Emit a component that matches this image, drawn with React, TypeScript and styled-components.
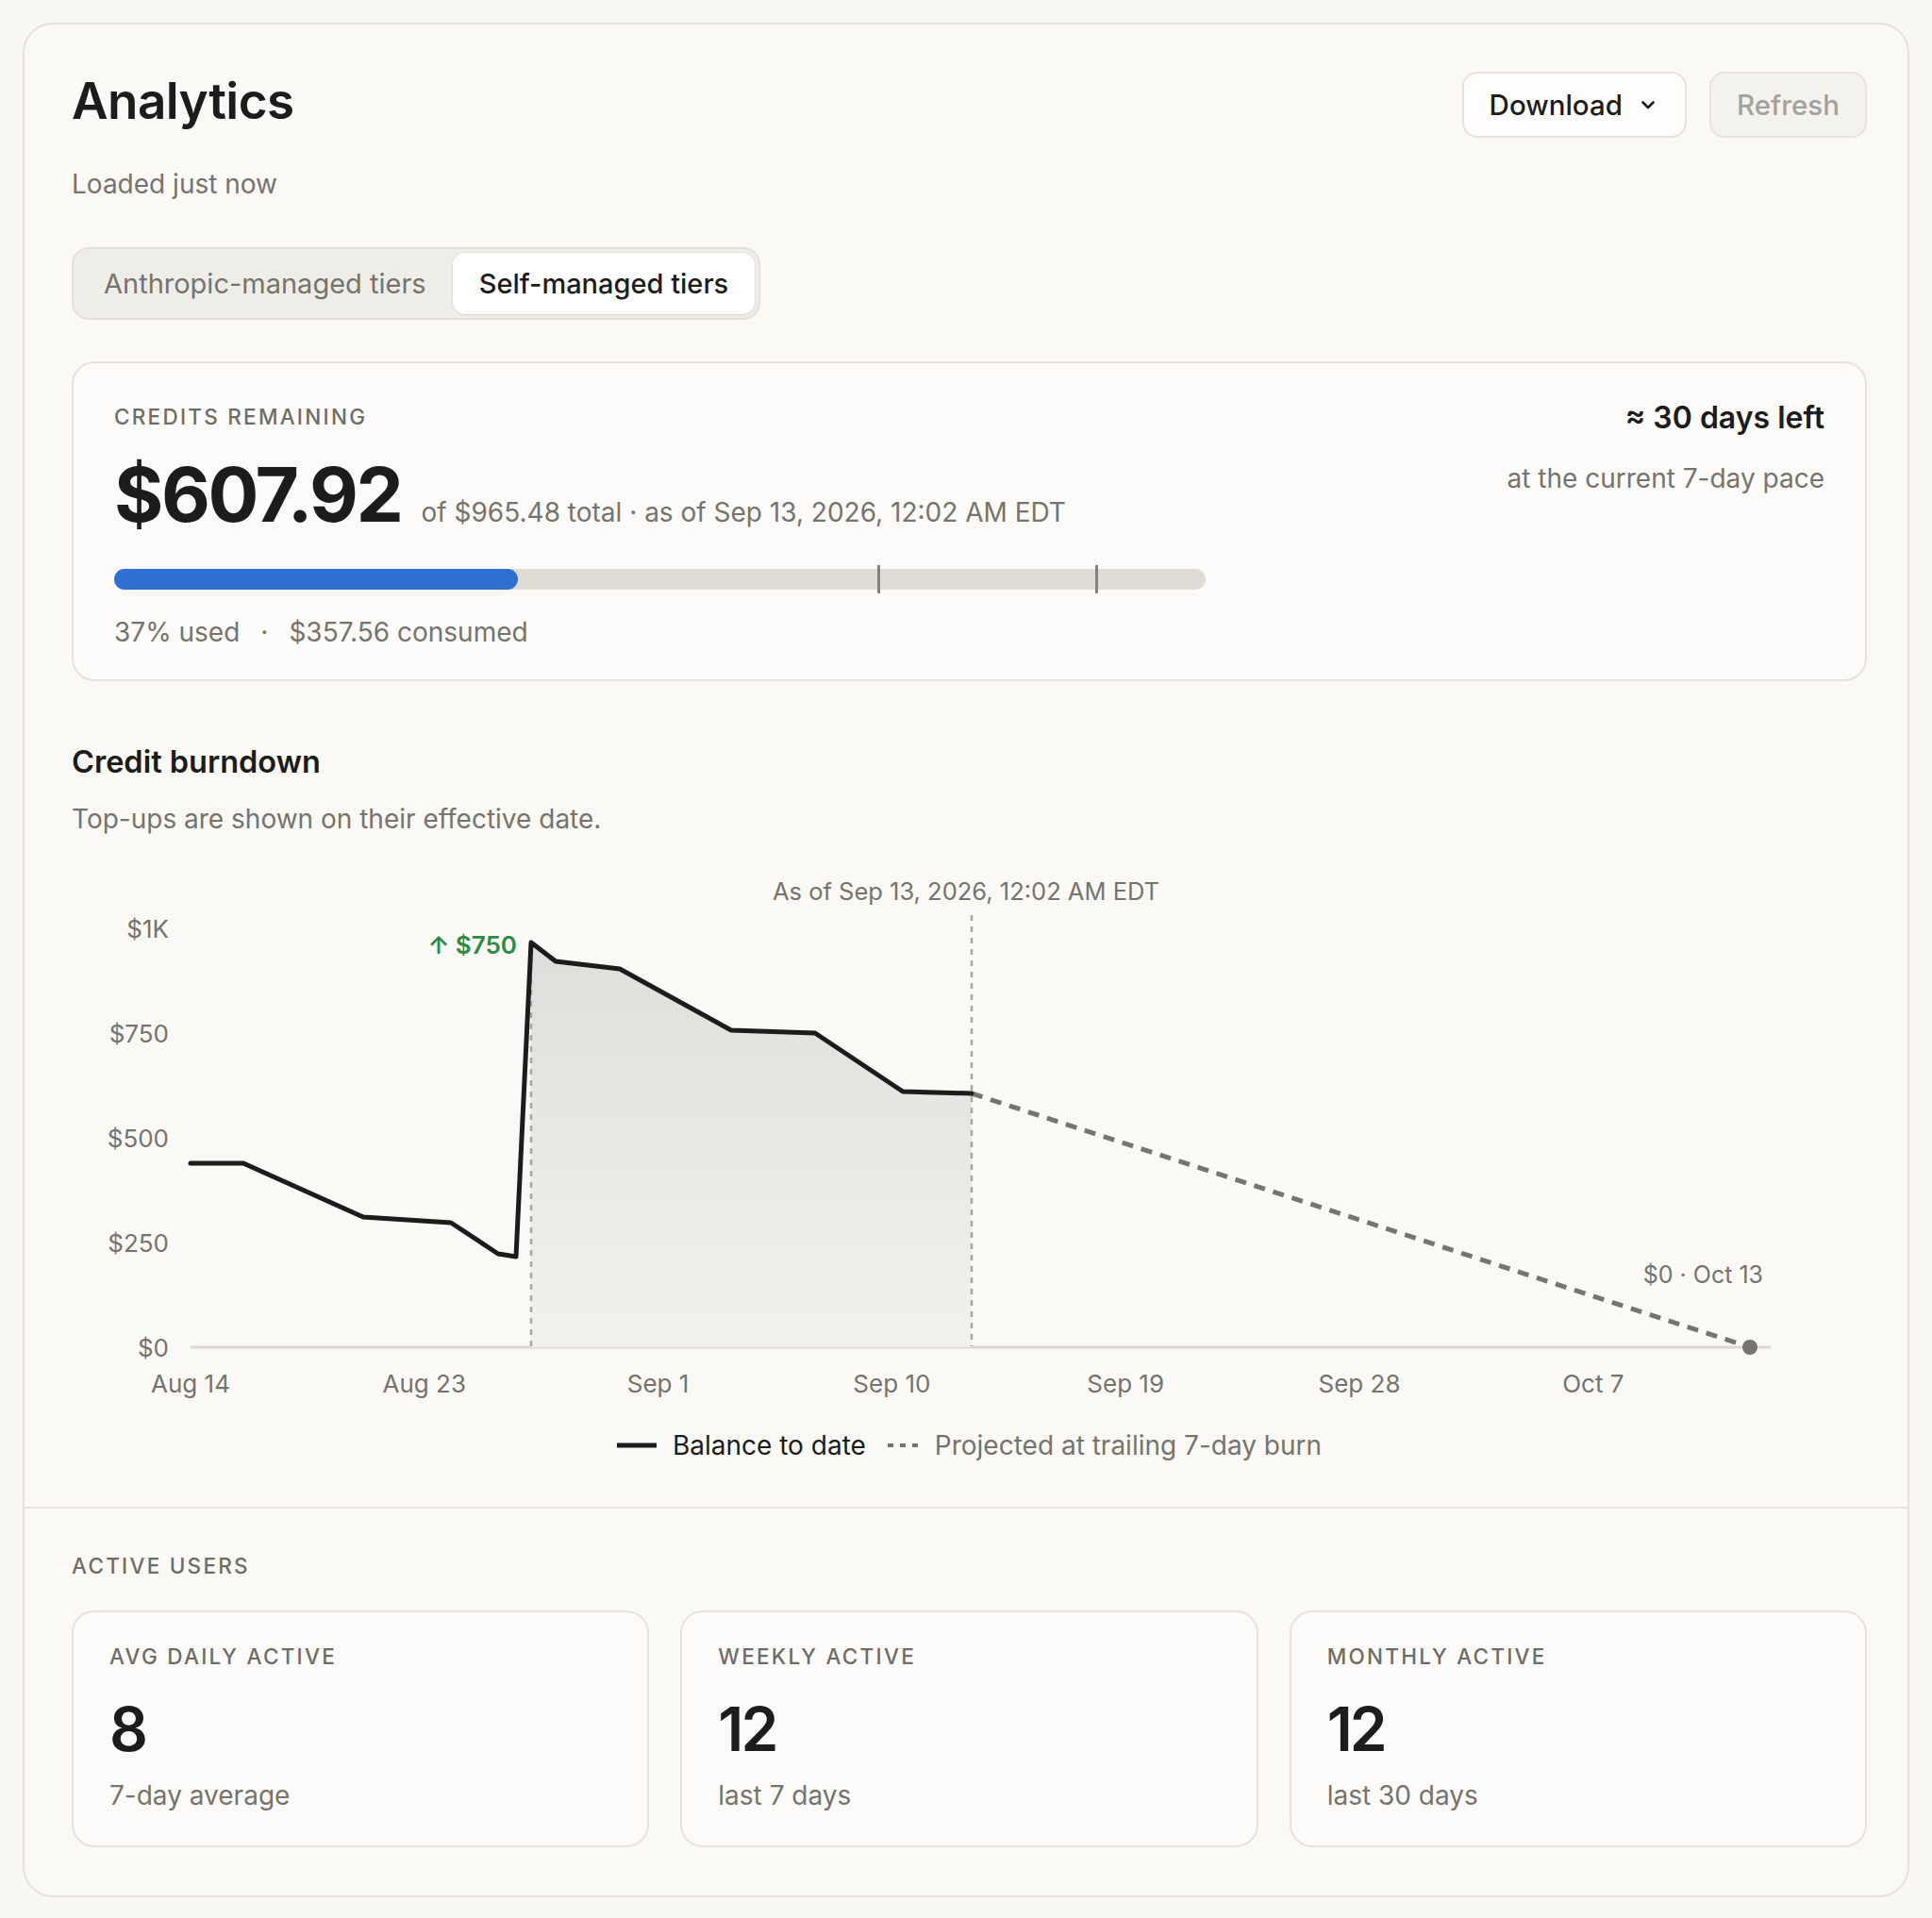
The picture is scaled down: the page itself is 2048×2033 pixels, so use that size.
import React from "react";
import styled, { createGlobalStyle } from "styled-components";

const GlobalStyle = createGlobalStyle`
  html, body { margin: 0; padding: 0; background: #f9f8f5; }
  body {
    font-family: Inter, "Noto Sans", "Liberation Sans", sans-serif;
    color: #1d1c1a;
    -webkit-font-smoothing: antialiased;
  }
  * { box-sizing: border-box; }
`;

const Page = styled.div`
  padding: 24px;
`;

const OuterCard = styled.div`
  background: #faf9f6;
  border: 2px solid #e6e3da;
  border-radius: 32px;
  overflow: hidden;
`;

const Section = styled.section<{ $divider?: boolean }>`
  padding: ${(p) => (p.$divider ? "45px 43px 51px 50px" : "50px 43px 45px 50px")};
  border-top: ${(p) => (p.$divider ? "2px solid #e6e3da" : "none")};
`;

const HeaderRow = styled.div`
  display: flex;
  justify-content: space-between;
  align-items: flex-start;
`;

const Title = styled.h1`
  margin: 0;
  font-size: 53px;
  line-height: 62px;
  font-weight: 600;
  letter-spacing: -0.01em;
  color: #1d1c1a;
`;

const Muted = styled.div<{ $mt?: number }>`
  font-size: 28px;
  line-height: 40px;
  color: #76736c;
  margin-top: ${(p) => p.$mt ?? 0}px;
`;

const Actions = styled.div`
  display: flex;
  gap: 24px;
`;

const Button = styled.button<{ $disabled?: boolean }>`
  height: 70px;
  display: inline-flex;
  align-items: center;
  gap: 15px;
  padding: 0 27px;
  border-radius: 16px;
  border: 2px solid #e6e3da;
  background: ${(p) => (p.$disabled ? "#f3f2ee" : "#fefdfb")};
  color: ${(p) => (p.$disabled ? "#a3a19b" : "#1d1c1a")};
  font-family: inherit;
  font-size: 29.5px;
  font-weight: 500;
  cursor: ${(p) => (p.$disabled ? "default" : "pointer")};
`;

const Segmented = styled.div`
  display: inline-flex;
  margin-top: 47px;
  padding: 4px;
  background: #efede8;
  border: 2px solid #e4e1d9;
  border-radius: 18px;
`;

const Tab = styled.div<{ $active?: boolean }>`
  height: 65px;
  display: flex;
  align-items: center;
  padding: 0 28px;
  border-radius: 13px;
  font-size: 29px;
  font-weight: ${(p) => (p.$active ? 500 : 400)};
  color: ${(p) => (p.$active ? "#1d1c1a" : "#76736c")};
  background: ${(p) => (p.$active ? "#ffffff" : "transparent")};
  box-shadow: ${(p) =>
    p.$active ? "0 1px 2px rgba(40,36,28,0.08), 0 0 0 1px rgba(40,36,28,0.04)" : "none"};
`;

const CreditsCard = styled.div`
  margin-top: 44px;
  display: flex;
  justify-content: space-between;
  padding: 41px 43px 30px 43px;
  background: #fcfbf9;
  border: 2px solid #e6e3da;
  border-radius: 24px;
`;

const CreditsMain = styled.div`
  flex: 1;
  max-width: 1157px;
`;

const Eyebrow = styled.div`
  font-size: 22.5px;
  line-height: 32px;
  font-weight: 500;
  letter-spacing: 0.1em;
  text-transform: uppercase;
  color: #6f6c66;
`;

const AmountRow = styled.div`
  margin-top: 26px;
  display: flex;
  align-items: baseline;
  gap: 21px;
`;

const Amount = styled.div`
  font-size: 80px;
  line-height: 80px;
  font-weight: 700;
  letter-spacing: -0.03em;
  color: #1d1c1a;
`;

const AmountNote = styled.div`
  font-size: 28px;
  color: #76736c;
`;

const Track = styled.div`
  position: relative;
  margin-top: 39px;
  height: 22px;
  border-radius: 11px;
  background: #dedbd4;
`;

const Fill = styled.div`
  height: 100%;
  border-radius: 11px;
  background: #2f6fd1;
`;

const Tick = styled.div`
  position: absolute;
  top: -4px;
  bottom: -4px;
  width: 3px;
  margin-left: -1px;
  background: #85827c;
`;

const UsageRow = styled.div`
  margin-top: 25px;
  display: flex;
  gap: 22px;
  font-size: 28px;
  line-height: 40px;
  color: #76736c;
`;

const CreditsSide = styled.div`
  text-align: right;
`;

const DaysLeft = styled.div`
  font-size: 32px;
  line-height: 34px;
  font-weight: 600;
  color: #1d1c1a;
`;

const SectionTitle = styled.h2`
  margin: 66px 0 0 0;
  font-size: 32.5px;
  line-height: 40px;
  font-weight: 600;
  color: #1d1c1a;
`;

const ChartSvg = styled.svg`
  display: block;
  margin-top: 33px;
  width: 1903px;
  height: 570px;
  font-family: Inter, "Noto Sans", "Liberation Sans", sans-serif;
`;

const Legend = styled.div`
  margin-top: 21px;
  display: flex;
  justify-content: center;
  align-items: center;
  gap: 23px;
  font-size: 28px;
  line-height: 40px;
`;

const LegendItem = styled.div<{ $muted?: boolean }>`
  display: flex;
  align-items: center;
  gap: 17px;
  color: ${(p) => (p.$muted ? "#76736c" : "#1d1c1a")};
`;

const StatsGrid = styled.div`
  margin-top: 31px;
  display: grid;
  grid-template-columns: repeat(3, 1fr);
  gap: 33px;
`;

const StatCard = styled.div`
  height: 251px;
  padding: 31px 38px 0 38px;
  background: #fcfbf9;
  border: 2px solid #e6e3da;
  border-radius: 24px;
`;

const StatValue = styled.div`
  margin-top: 29px;
  font-size: 64px;
  line-height: 64px;
  font-weight: 600;
  letter-spacing: -0.045em;
  color: #1d1c1a;
`;

const Chevron = () => (
  <svg width="24" height="24" viewBox="0 0 24 24" fill="none" stroke="#1d1c1a" strokeWidth="2.6" strokeLinecap="round" strokeLinejoin="round">
    <path d="m6.5 9.5 5.5 5.5 5.5-5.5" />
  </svg>
);

const linePoints: [number, number][] = [
  [202, 1232], [258, 1232], [385, 1289], [478, 1295], [528, 1328], [547, 1331],
  [563, 998], [589, 1018], [657, 1026], [775, 1091], [864, 1094], [957, 1156], [1030, 1158],
];

const areaPoints: [number, number][] = [
  [563, 1427], [563, 998], [589, 1018], [657, 1026], [775, 1091], [864, 1094], [957, 1156], [1030, 1158], [1030, 1427],
];

const yTicks = [
  { label: "$1K", y: 983 },
  { label: "$750", y: 1094 },
  { label: "$500", y: 1205 },
  { label: "$250", y: 1316 },
  { label: "$0", y: 1427 },
];

const xTicks = ["Aug 14", "Aug 23", "Sep 1", "Sep 10", "Sep 19", "Sep 28", "Oct 7"];

const pts = (p: [number, number][]) => p.map(([x, y]) => `${x},${y}`).join(" ");

const BurndownChart = () => (
  <ChartSvg viewBox="76 920 1903 570">
    <defs>
      <linearGradient id="areaGrad" x1="0" y1="0" x2="0" y2="1">
        <stop offset="0%" stopColor="#dfdedb" />
        <stop offset="100%" stopColor="#f2f1ed" />
      </linearGradient>
    </defs>
    {yTicks.map((t) => (
      <text key={t.label} x={179} y={t.y + 10} textAnchor="end" fontSize="26" fill="#76736c">
        {t.label}
      </text>
    ))}
    {xTicks.map((t, i) => (
      <text key={t} x={202 + i * 247.8} y={1475} textAnchor="middle" fontSize="26" fill="#76736c">
        {t}
      </text>
    ))}
    <line x1={202} y1={1427} x2={1877} y2={1427} stroke="#dcd9d1" strokeWidth="3" />
    <polygon points={pts(areaPoints)} fill="url(#areaGrad)" />
    <line x1={563} y1={1000} x2={563} y2={1426} stroke="#a9a7a1" strokeWidth="2.5" strokeDasharray="6 6" />
    <line x1={1030} y1={969} x2={1030} y2={1426} stroke="#a9a7a1" strokeWidth="2.5" strokeDasharray="6 6" />
    <text x={1024} y={953} textAnchor="middle" fontSize="25.5" fill="#76736c">
      As of Sep 13, 2026, 12:02 AM EDT
    </text>
    <line x1={1030} y1={1158} x2={1855} y2={1427} stroke="#76746f" strokeWidth="5" strokeDasharray="12 9" />
    <circle cx={1855} cy={1427} r={8} fill="#76746f" />
    <text x={1869} y={1359} textAnchor="end" fontSize="25" fill="#76736c">
      $0 · Oct 13
    </text>
    <polyline points={pts(linePoints)} fill="none" stroke="#1d1c1a" strokeWidth="5" strokeLinejoin="round" strokeLinecap="round" />
    <text x={548} y={1010} textAnchor="end" fontSize="26" fontWeight="600" fill="#2b8a44">
      ↑ $750
    </text>
  </ChartSvg>
);

const stats = [
  { label: "Avg daily active", value: "8", sub: "7-day average" },
  { label: "Weekly active", value: "12", sub: "last 7 days" },
  { label: "Monthly active", value: "12", sub: "last 30 days" },
];

export default function App() {
  const usedPct = 37;
  return (
    <>
      <GlobalStyle />
      <Page>
        <OuterCard>
          <Section>
            <HeaderRow>
              <div>
                <Title>Analytics</Title>
                <Muted $mt={37}>Loaded just now</Muted>
              </div>
              <Actions>
                <Button>
                  Download
                  <Chevron />
                </Button>
                <Button $disabled>Refresh</Button>
              </Actions>
            </HeaderRow>

            <Segmented>
              <Tab>Anthropic-managed tiers</Tab>
              <Tab $active>Self-managed tiers</Tab>
            </Segmented>

            <CreditsCard>
              <CreditsMain>
                <Eyebrow>Credits remaining</Eyebrow>
                <AmountRow>
                  <Amount>$607.92</Amount>
                  <AmountNote>of $965.48 total · as of Sep 13, 2026, 12:02 AM EDT</AmountNote>
                </AmountRow>
                <Track>
                  <Fill style={{ width: `${usedPct}%` }} />
                  <Tick style={{ left: "70%" }} />
                  <Tick style={{ left: "90%" }} />
                </Track>
                <UsageRow>
                  <span>37% used</span>
                  <span>·</span>
                  <span>$357.56 consumed</span>
                </UsageRow>
              </CreditsMain>
              <CreditsSide>
                <DaysLeft>≈ 30 days left</DaysLeft>
                <Muted $mt={27}>at the current 7-day pace</Muted>
              </CreditsSide>
            </CreditsCard>

            <SectionTitle>Credit burndown</SectionTitle>
            <Muted $mt={20}>Top-ups are shown on their effective date.</Muted>

            <BurndownChart />

            <Legend>
              <LegendItem>
                <svg width="42" height="6" viewBox="0 0 42 6">
                  <line x1="0" y1="3" x2="42" y2="3" stroke="#1d1c1a" strokeWidth="5" />
                </svg>
                Balance to date
              </LegendItem>
              <LegendItem $muted>
                <svg width="33" height="6" viewBox="0 0 33 6">
                  <line x1="0" y1="3" x2="33" y2="3" stroke="#76746f" strokeWidth="4" strokeDasharray="6 7" />
                </svg>
                Projected at trailing 7-day burn
              </LegendItem>
            </Legend>
          </Section>

          <Section $divider>
            <Eyebrow>Active users</Eyebrow>
            <StatsGrid>
              {stats.map((s) => (
                <StatCard key={s.label}>
                  <Eyebrow>{s.label}</Eyebrow>
                  <StatValue>{s.value}</StatValue>
                  <Muted $mt={18}>{s.sub}</Muted>
                </StatCard>
              ))}
            </StatsGrid>
          </Section>
        </OuterCard>
      </Page>
    </>
  );
}
